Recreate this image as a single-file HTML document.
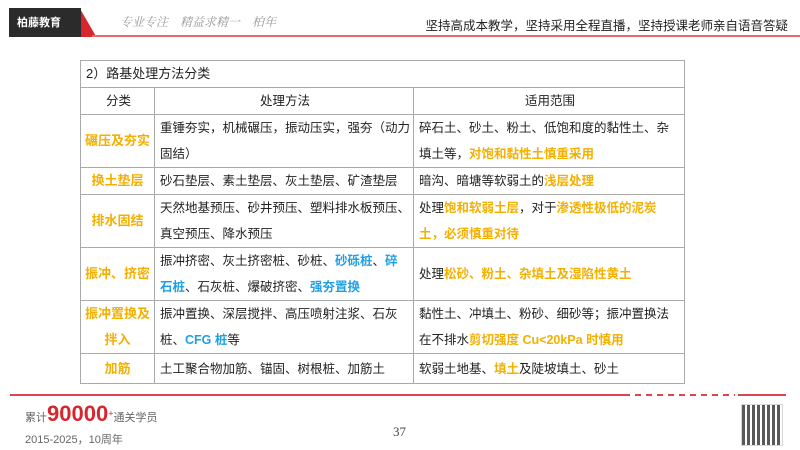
<!DOCTYPE html>
<html><head><meta charset="utf-8"><style>
*{margin:0;padding:0;box-sizing:border-box}
body{width:800px;height:450px;background:#fff;position:relative;overflow:hidden;font-family:"Liberation Sans","Noto Sans CJK SC",sans-serif;color:#222}
.logo{position:absolute;left:9px;top:8px;width:72px;height:29px;background:#2b2b2b;color:#fff;font-size:11px;font-weight:bold;padding:6px 0 0 8px}
.red1{position:absolute;left:68px;top:8px;width:20px;height:29px;background:#d7262e;transform:skewX(30deg)}
.line{position:absolute;left:92px;top:35px;width:708px;height:2px;background:#e36b6b}
.slogan{position:absolute;left:120px;top:13px;font-size:12px;color:#999;font-family:"Noto Serif CJK SC",serif;font-style:italic}
.rt{position:absolute;right:12px;top:15px;font-size:12.5px;color:#222}
table{position:absolute;left:80px;top:60px;width:605px;border-collapse:collapse;font-size:12.5px;table-layout:fixed}
td{border:1px solid #aaa;padding:0 3px 0 5px;line-height:26px;vertical-align:middle}
.c{text-align:center}
.o{color:#f4b000;font-weight:bold}
.b{color:#1e9fe6;font-weight:bold}
.k{color:#f4b000;font-weight:bold;text-align:center;padding:0 2px;font-size:13px}
.fl{position:absolute;left:10px;top:394px;width:620px;height:2px;background:#d9464b}
.fd{position:absolute;left:635px;top:394px;width:100px;height:2px;background:repeating-linear-gradient(90deg,#d9464b 0 6px,transparent 6px 11px)}
.fr{position:absolute;left:738px;top:394px;width:48px;height:2px;background:#d9464b}
</style></head><body>
<div class="red1"></div>
<div class="logo">柏藤教育</div>
<div class="line"></div>
<div class="slogan">专业专注　精益求精一　柏年</div>
<div class="rt">坚持高成本教学，坚持采用全程直播，坚持授课老师亲自语音答疑</div>
<table>
<colgroup><col style="width:74px"><col style="width:259px"><col></colgroup>
<tr style="height:27px"><td colspan="3" style="font-size:13px">2）路基处理方法分类</td></tr>
<tr style="height:25px"><td class="c">分类</td><td class="c">处理方法</td><td class="c">适用范围</td></tr>
<tr style="height:53px"><td class="k">碾压及夯实</td><td>重锤夯实，机械碾压，振动压实，强夯（动力固结）</td><td>碎石土、砂土、粉土、低饱和度的黏性土、杂填土等，<span class="o">对饱和黏性土慎重采用</span></td></tr>
<tr style="height:27px"><td class="k">换土垫层</td><td>砂石垫层、素土垫层、灰土垫层、矿渣垫层</td><td>暗沟、暗塘等软弱土的<span class="o">浅层处理</span></td></tr>
<tr style="height:53px"><td class="k">排水固结</td><td>天然地基预压、砂井预压、塑料排水板预压、真空预压、降水预压</td><td>处理<span class="o">饱和软弱土层</span>，对于<span class="o">渗透性极低的泥炭土，必须慎重对待</span></td></tr>
<tr style="height:50px"><td class="k">振冲、挤密</td><td>振冲挤密、灰土挤密桩、砂桩、<span class="b">砂砾桩</span>、<span class="b">碎石桩</span>、石灰桩、爆破挤密、<span class="b">强夯置换</span></td><td>处理<span class="o">松砂、粉土、杂填土及湿陷性黄土</span></td></tr>
<tr style="height:50px"><td class="k">振冲置换及拌入</td><td>振冲置换、深层搅拌、高压喷射注浆、石灰桩、<span class="b">CFG 桩</span>等</td><td>黏性土、冲填土、粉砂、细砂等；振冲置换法在不排水<span class="o">剪切强度 Cu&lt;20kPa 时慎用</span></td></tr>
<tr style="height:30px"><td class="k">加筋</td><td>土工聚合物加筋、锚固、树根桩、加筋土</td><td>软弱土地基、<span class="o">填土</span>及陡坡填土、砂土</td></tr>
</table>
<div class="fl"></div><div class="fd"></div><div class="fr"></div>
<div style="position:absolute;left:25px;top:401px;font-size:11px;color:#666">累计<span style="color:#d7262e;font-size:22px;font-weight:bold">90000</span><sup style="color:#d7262e">+</sup>通关学员</div>
<div style="position:absolute;left:25px;top:431px;font-size:11px;color:#666">2015-2025，10周年</div>
<div style="position:absolute;left:393px;top:424px;font-size:13px;color:#444;font-family:'Liberation Serif',serif">37</div>
<div style="position:absolute;left:741px;top:404px;width:42px;height:42px;border:1px solid #ccc;background:repeating-linear-gradient(90deg,#222 0 3px,#fff 3px 5px),#222;opacity:.75"></div>
</body></html>
